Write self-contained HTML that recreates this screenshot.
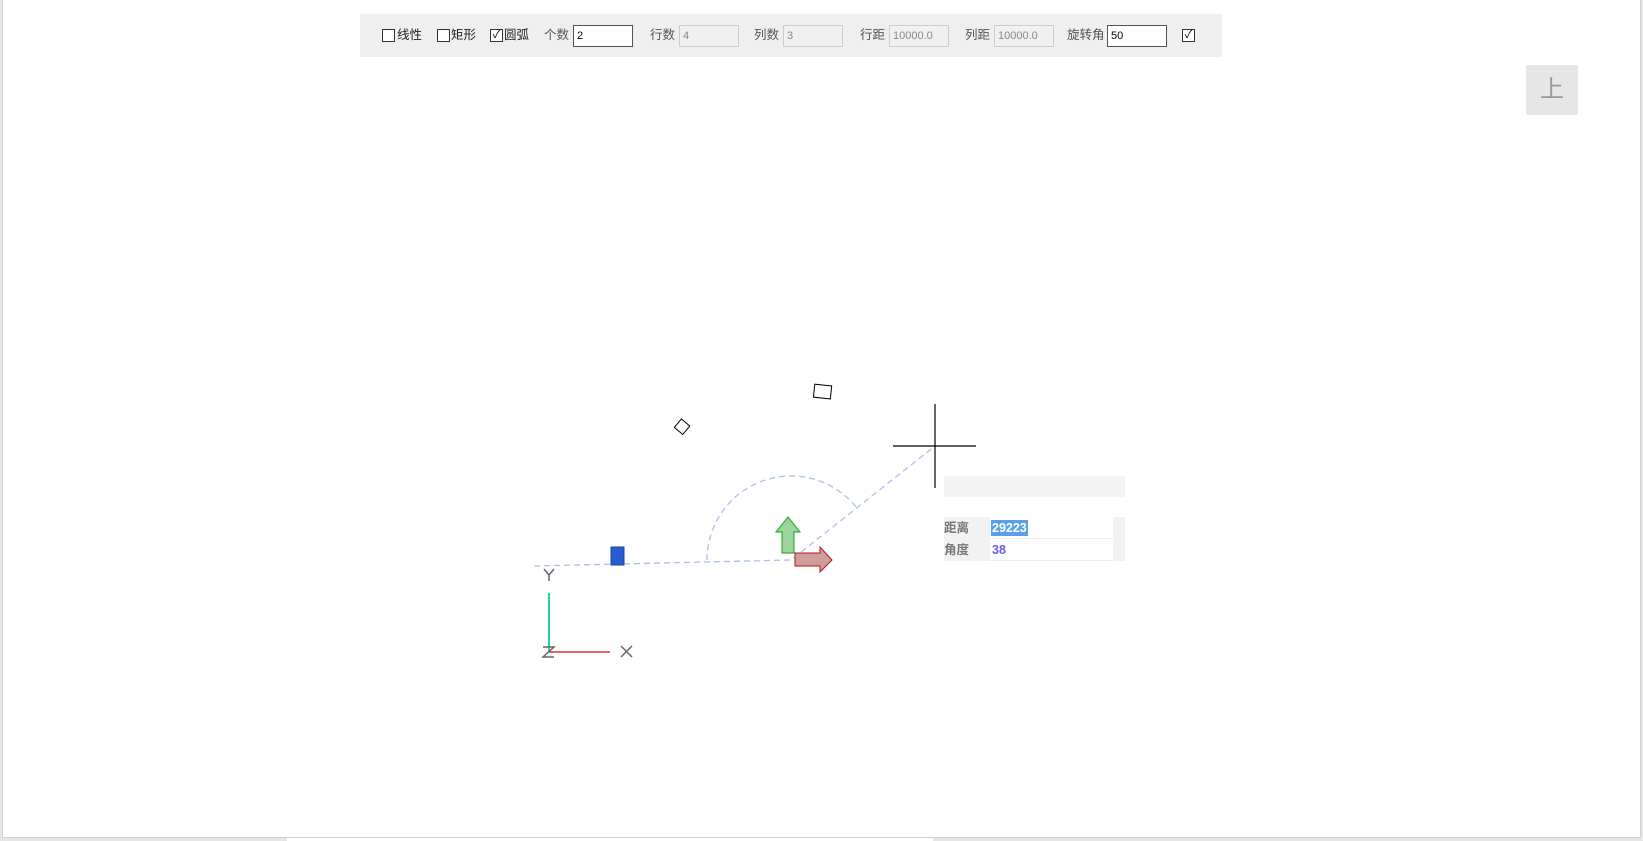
<!DOCTYPE html>
<html><head><meta charset="utf-8"><style>
*{margin:0;padding:0;box-sizing:border-box}
body{width:1643px;height:841px;background:#e6e6e6;position:relative;overflow:hidden;font-family:"Liberation Sans","Noto Sans CJK SC",sans-serif}
#main{position:absolute;left:2px;top:0;width:1639px;height:838px;background:#fff;border:1px solid #d0d0d0;border-top:none}
#tab{position:absolute;left:287px;top:838px;width:646px;height:3px;background:#fff}
#tb{position:absolute;left:360px;top:14px;width:862px;height:43px;background:#efefef}
.t{position:absolute;top:13px;font-size:12.5px;color:#222;line-height:16px}
.g{color:#555}
.cb{position:absolute;top:15px;width:13px;height:13px;border:1px solid #333;background:#fff}
.in{position:absolute;top:11px;height:22px;width:60px;border:1px solid #ccc;background:#f0f0f0;font-size:11px;color:#888;padding:4px 3px}
.in.a{border:1px solid #555;background:#fff;color:#000}
#up{position:absolute;left:1526px;top:65px;width:52px;height:50px;background:#e6e6e6;color:#999;font-size:24px;text-align:center;line-height:50px}
#info{position:absolute;left:944px;top:476px;width:181px;height:21px;background:#f4f4f4}
.row{position:absolute;left:944px;width:181px;height:22px;border-bottom:1px solid #eee;font-size:12.5px;font-weight:bold}
.row .l{position:absolute;left:0;top:0;width:46px;height:22px;background:#f2f2f2;color:#777;line-height:22px}
.row .r{position:absolute;right:0;top:0;width:12px;height:22px;background:#f2f2f2}
</style></head><body>
<div id="main"></div><div id="tab"></div>
<div id="tb">
<div class="cb" style="left:22px"></div><div class="t" style="left:37px">线性</div>
<div class="cb" style="left:77px"></div><div class="t" style="left:91px">矩形</div>
<div class="cb" style="left:130px;font-size:11px;line-height:11px;text-align:center">✓</div><div class="t" style="left:144px">圆弧</div>
<div class="t g" style="left:184px">个数</div><div class="in a" style="left:213px">2</div>
<div class="t g" style="left:290px">行数</div><div class="in" style="left:319px">4</div>
<div class="t g" style="left:394px">列数</div><div class="in" style="left:423px">3</div>
<div class="t g" style="left:500px">行距</div><div class="in" style="left:529px">10000.0</div>
<div class="t g" style="left:605px">列距</div><div class="in" style="left:634px">10000.0</div>
<div class="t g" style="left:707px">旋转角</div><div class="in a" style="left:747px">50</div>
<div class="cb" style="left:822px;font-size:11px;line-height:11px;text-align:center">✓</div>
</div>
<div id="up">上</div>
<svg width="1643" height="841" style="position:absolute;left:0;top:0">
<g transform="translate(-2,0)">
<g fill="none" stroke="#aac0e8" stroke-width="1.3" stroke-dasharray="6,4">
<path d="M536 566 L793 560 L937 446"/>
<path d="M709 560 A84 84 0 0 1 859 508"/>
</g>
<rect x="816" y="385" width="17" height="13" fill="#fff" stroke="#000" transform="rotate(6 824 392)"/>
<rect x="679" y="421" width="11" height="11" fill="#fff" stroke="#000" transform="rotate(40 684 426)"/>
<path d="M895 446H978M937 404V488" stroke="#000" stroke-width="1.2"/>
<rect x="613" y="547" width="13" height="18" fill="#2a5bd0" stroke="#1a40b0"/>
<path d="M784 553V532H778L790 517L802 532H796V553Z" fill="#9dd39c" stroke="#18a018"/>
<path d="M797 553H822V547L834 560L822 572V566H797Z" fill="#d09c9c" stroke="#b01818"/>
<path d="M551 593V652" stroke="#1ed6a0" stroke-width="2"/>
<path d="M551 652H612" stroke="#e83030" stroke-width="1.5"/>
<g stroke="#666" stroke-width="1.5" fill="none">
<path d="M546 569L551 575L556 569M551 575V581"/>
<path d="M545 647H556L545 657H556"/>
<path d="M623 646L634 657M634 646L623 657"/>
</g>
</g>
</svg>
<div id="info"></div>
<div class="row" style="top:517px"><div class="l">距离</div><span style="position:absolute;left:47px;top:3px;background:#5aa0e8;color:#fff;padding:0 1px;line-height:16px">29223</span><div class="r"></div></div>
<div class="row" style="top:539px"><div class="l">角度</div><span style="position:absolute;left:48px;top:3px;color:#6a5af0;line-height:16px">38</span><div class="r"></div></div>
</body></html>
